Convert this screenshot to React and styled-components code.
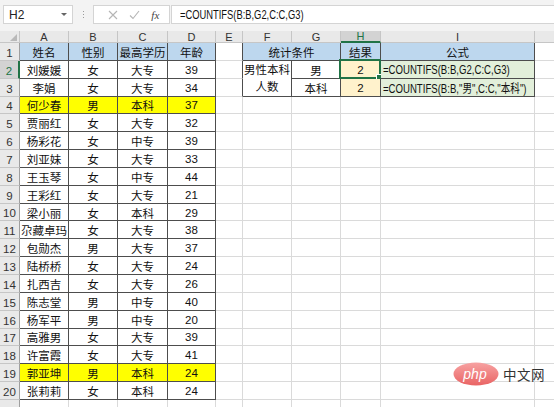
import React from 'react'
import styled, { createGlobalStyle } from 'styled-components'

const GlobalStyle = createGlobalStyle`
  * { box-sizing: border-box; }
  html, body { margin: 0; padding: 0; background: #fff; }
  body {
    font-family: "Liberation Sans", "Noto Sans CJK SC", sans-serif;
    overflow: hidden;
  }
`

const COLS = ['A', 'B', 'C', 'D', 'E', 'F', 'G', 'H', 'I', 'J']
const WIDTHS = [49, 49, 50, 48, 27, 49, 49, 40, 154, 40]
const ROWS = 21

const BLUE = '#bdd7ee'
const YELLOW = '#ffff00'
const PALE = '#fff2cc'
const GREEN = '#e2efda'

const people = [
  ['刘媛媛', '女', '大专', '39'],
  ['李娟', '女', '大专', '34'],
  ['何少春', '男', '本科', '37'],
  ['贾丽红', '女', '大专', '32'],
  ['杨彩花', '女', '中专', '39'],
  ['刘亚妹', '女', '大专', '33'],
  ['王玉琴', '女', '中专', '44'],
  ['王彩红', '女', '大专', '21'],
  ['梁小丽', '女', '本科', '29'],
  ['尕藏卓玛', '女', '大专', '38'],
  ['包勋杰', '男', '大专', '37'],
  ['陆桥桥', '女', '大专', '24'],
  ['扎西吉', '女', '大专', '26'],
  ['陈志堂', '男', '中专', '40'],
  ['杨军平', '男', '中专', '20'],
  ['高雅男', '女', '大专', '39'],
  ['许富霞', '女', '大专', '41'],
  ['郭亚坤', '男', '本科', '24'],
  ['张莉莉', '女', '本科', '24'],
]

// right hand table, keyed by "row,col"
const stats = {
  '1,5': { text: '统计条件', bg: BLUE, cs: 2 },
  '1,7': { text: '结果', bg: BLUE },
  '1,8': { text: '公式', bg: BLUE },
  '2,5': { text: <>男性本科<br />人数</>, rs: 2, wrap: true },
  '2,6': { text: '男' },
  '2,7': { text: '2', bg: PALE, selected: true },
  '2,8': { text: '=COUNTIFS(B:B,G2,C:C,G3)', bg: GREEN, left: true, formula: true },
  '3,6': { text: '本科' },
  '3,7': { text: '2', bg: PALE },
  '3,8': { text: '=COUNTIFS(B:B,"男",C:C,"本科")', bg: GREEN, left: true, formula: true },
}
const covered = { '1,6': 1, '3,5': 1 }

const inTable = (r, c) =>
  (r >= 1 && r <= 20 && c >= 0 && c <= 3) || (r >= 1 && r <= 3 && c >= 5 && c <= 8)

function cellAt(r, c) {
  if (covered[`${r},${c}`]) return null
  if (stats[`${r},${c}`]) return stats[`${r},${c}`]
  if (r === 1 && c <= 3) return { text: ['姓名', '性别', '最高学历', '年龄'][c], bg: BLUE }
  if (r >= 2 && r <= 20 && c <= 3) {
    const row = people[r - 2]
    return { text: row[c], bg: r === 4 || r === 19 ? YELLOW : '#fff' }
  }
  return { text: '' }
}

const Page = styled.div`
  width: 554px;
  height: 407px;
  position: relative;
  overflow: hidden;
  background: #fff;
`

const FormulaBar = styled.div`
  height: 31px;
  background: #f3f3f3;
  display: flex;
  align-items: flex-start;
  padding: 5px 0 0 3px;
`

const NameBox = styled.div`
  width: 70px;
  height: 19px;
  background: #fff;
  border: 1px solid #d4d4d4;
  display: flex;
  align-items: center;
  justify-content: space-between;
  padding: 0 5px 0 5px;
  font-size: 12px;
  color: #222;
`

const Caret = styled.span`
  width: 0;
  height: 0;
  border-left: 3px solid transparent;
  border-right: 3px solid transparent;
  border-top: 3px solid #666;
`

const Dots = styled.div`
  width: 20px;
  height: 19px;
  display: flex;
  flex-direction: column;
  align-items: center;
  justify-content: center;
  gap: 2px;
  span {
    width: 1px;
    height: 1px;
    background: #9a9a9a;
  }
`

const ActionBox = styled.div`
  width: 77px;
  height: 19px;
  background: #fff;
  border: 1px solid #d4d4d4;
  display: flex;
  align-items: center;
  justify-content: space-around;
  padding: 0 4px 0 8px;
`

const Fx = styled.span`
  font-family: "Liberation Serif", serif;
  font-style: italic;
  font-size: 11px;
  color: #444;
`

const FormulaInput = styled.div`
  flex: 1;
  height: 19px;
  margin-left: 1px;
  background: #fff;
  border: 1px solid #d4d4d4;
  border-right: none;
  display: flex;
  align-items: center;
  padding-left: 8px;
  font-size: 12px;
  color: #111;
`

// Calibri-like narrow rendering of Latin formula text
const Narrow = styled.span`
  display: inline-block;
  white-space: nowrap;
  transform: scaleX(${p => p.$scale || 0.82});
  transform-origin: left center;
`

const Sheet = styled.div`
  display: grid;
  grid-template-columns: 20px ${WIDTHS.map(w => `${w}px`).join(' ')} 1fr;
  grid-template-rows: 12px repeat(${ROWS}, 17.85px);
`

const Corner = styled.div`
  grid-row: 1;
  grid-column: 1;
  background: #e9e9e9;
  border-right: 1px solid #c6c6c6;
  border-bottom: 1px solid #c6c6c6;
  position: relative;
  &::after {
    content: '';
    position: absolute;
    right: 2px;
    bottom: 1px;
    border-left: 7px solid transparent;
    border-bottom: 7px solid #b9b9b9;
  }
`

const ColHead = styled.div`
  grid-row: 1;
  grid-column: ${p => p.$col};
  background: ${p => (p.$active ? '#d3d3d3' : '#e9e9e9')};
  border-right: 1px solid #c6c6c6;
  border-bottom: ${p => (p.$active ? '2px solid #217346' : '1px solid #c6c6c6')};
  color: ${p => (p.$active ? '#217346' : '#333')};
  font-size: 11px;
  display: flex;
  align-items: center;
  justify-content: center;
  line-height: 1;
  padding-top: 1px;
`

const RowHead = styled.div`
  grid-row: ${p => p.$row};
  grid-column: 1;
  background: ${p => (p.$active ? '#d3d3d3' : '#e9e9e9')};
  border-right: ${p => (p.$active ? '2px solid #217346' : '1px solid #9f9f9f')};
  border-bottom: 1px solid #c6c6c6;
  color: ${p => (p.$active ? '#217346' : '#333')};
  font-size: 11.5px;
  display: flex;
  align-items: flex-end;
  justify-content: center;
  padding-bottom: 1px;
`

const Cell = styled.div`
  grid-row: ${p => p.$row} / span ${p => p.$rs};
  grid-column: ${p => p.$col} / span ${p => p.$cs};
  position: relative;
  background: ${p => p.$bg};
  border-right: 1px solid ${p => (p.$darkRight ? '#4d4d4d' : '#dadada')};
  border-bottom: 1px solid ${p => (p.$darkBottom ? '#4d4d4d' : '#dadada')};
  display: flex;
  align-items: center;
  justify-content: ${p => (p.$left ? 'flex-start' : 'center')};
  padding: ${p => (p.$left ? '0 0 0 2px' : '0')};
  padding-top: 1px;
  font-size: ${p => (p.$formula ? '12px' : '11.5px')};
  color: #111;
  white-space: nowrap;
`

const Wrapped = styled.span`
  display: block;
  text-align: center;
  line-height: 17px;
  white-space: normal;
`

const Selection = styled.div`
  position: absolute;
  left: -2px;
  top: -2px;
  right: -1px;
  bottom: -1px;
  border: 2px solid #217346;
  pointer-events: none;
  &::after {
    content: '';
    position: absolute;
    right: -4px;
    bottom: -4px;
    width: 5px;
    height: 5px;
    background: #217346;
    border: 1px solid #fff;
  }
`

const Watermark = styled.div`
  position: absolute;
  left: 453px;
  top: 362px;
  display: flex;
  align-items: center;
  gap: 4px;
`

const WaterText = styled.span`
  font-family: "Noto Sans CJK SC", sans-serif;
  font-size: 13.5px;
  color: #333;
  letter-spacing: 0.5px;
`

function PhpLogo() {
  return (
    <svg width="46" height="24" viewBox="0 0 46 24">
      <defs>
        <linearGradient id="php" x1="0" y1="0" x2="0" y2="1">
          <stop offset="0" stopColor="#f7a2a2" />
          <stop offset="1" stopColor="#e96464" />
        </linearGradient>
      </defs>
      <ellipse cx="23" cy="12" rx="22.5" ry="11.5" fill="url(#php)" />
      <text
        x="22"
        y="16.5"
        textAnchor="middle"
        fill="#fff"
        fontFamily="Liberation Sans, sans-serif"
        fontStyle="italic"
        fontSize="14"
      >
        php
      </text>
    </svg>
  )
}

function Cross() {
  return (
    <svg width="10" height="10" viewBox="0 0 10 10">
      <path d="M1 1 L9 9 M9 1 L1 9" stroke="#b5b5b5" strokeWidth="1.1" />
    </svg>
  )
}

function Check() {
  return (
    <svg width="11" height="10" viewBox="0 0 11 10">
      <path d="M1 5.5 L4 8.5 L10 1" stroke="#b5b5b5" strokeWidth="1.1" fill="none" />
    </svg>
  )
}

function SheetCells() {
  const cells = []
  for (let r = 1; r <= ROWS; r++) {
    for (let c = 0; c < COLS.length; c++) {
      const cell = cellAt(r, c)
      if (!cell) continue
      const cs = cell.cs || 1
      const rs = cell.rs || 1
      const lastCol = c + cs - 1
      const lastRow = r + rs - 1
      const darkRight = inTable(r, lastCol) || inTable(r, lastCol + 1)
      const darkBottom = inTable(lastRow, c) || inTable(lastRow + 1, c)
      let content = cell.text
      if (cell.wrap) content = <Wrapped>{cell.text}</Wrapped>
      if (cell.formula) content = <Narrow $scale={0.8}>{cell.text}</Narrow>
      cells.push(
        <Cell
          key={`${r}-${c}`}
          $row={r + 1}
          $col={c + 2}
          $rs={rs}
          $cs={cs}
          $bg={cell.bg || '#fff'}
          $left={cell.left}
          $formula={cell.formula}
          $darkRight={darkRight}
          $darkBottom={darkBottom}
        >
          {content}
          {cell.selected && <Selection />}
        </Cell>
      )
    }
  }
  return cells
}

export default function App() {
  return (
    <Page>
      <GlobalStyle />
      <FormulaBar>
        <NameBox>
          H2
          <Caret />
        </NameBox>
        <Dots>
          <span />
          <span />
          <span />
        </Dots>
        <ActionBox>
          <Cross />
          <Check />
          <Fx>fx</Fx>
        </ActionBox>
        <FormulaInput>
          <Narrow $scale={0.78}>=COUNTIFS(B:B,G2,C:C,G3)</Narrow>
        </FormulaInput>
      </FormulaBar>
      <Sheet>
        <Corner />
        {COLS.map((name, i) => (
          <ColHead key={name} $col={i + 2} $active={name === 'H'}>
            {name === 'J' ? '' : name}
          </ColHead>
        ))}
        <ColHead $col={COLS.length + 2} />
        {Array.from({ length: ROWS }, (_, i) => (
          <RowHead key={i} $row={i + 2} $active={i + 1 === 2}>
            {i + 1 <= 20 ? i + 1 : ''}
          </RowHead>
        ))}
        <SheetCells />
      </Sheet>
      <Watermark>
        <PhpLogo />
        <WaterText>中文网</WaterText>
      </Watermark>
    </Page>
  )
}
